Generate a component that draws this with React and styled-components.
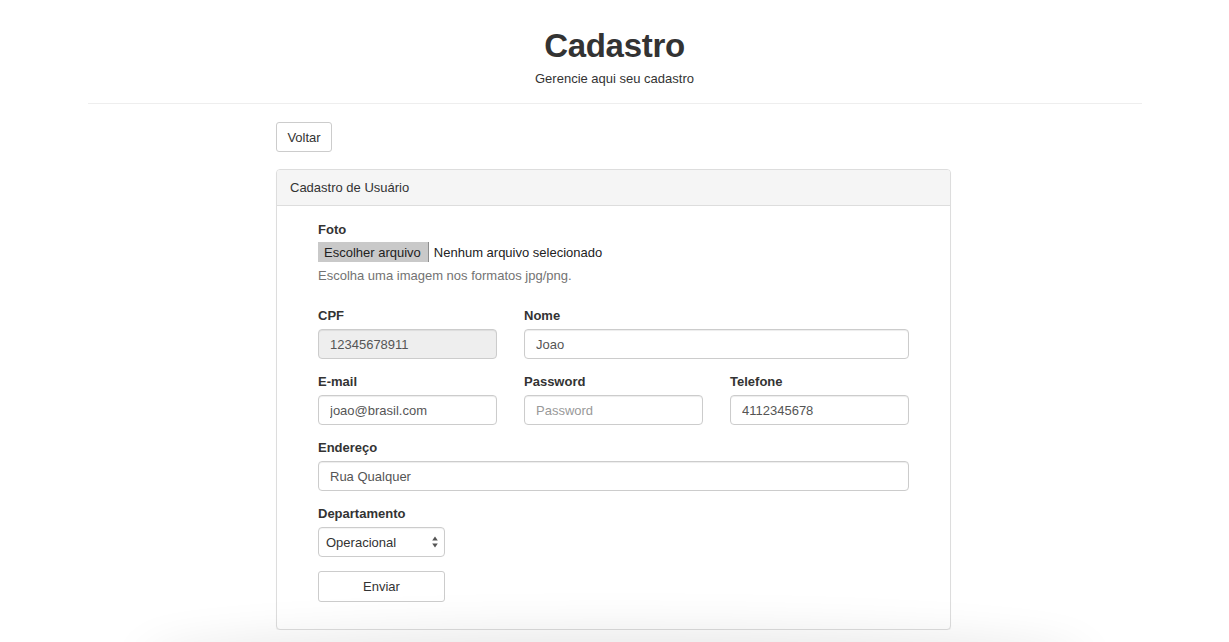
import React from "react";
import styled, { createGlobalStyle } from "styled-components";

const GlobalStyle = createGlobalStyle`
  * { box-sizing: border-box; }
  html, body { margin: 0; padding: 0; background: #fff; }
  body {
    font-family: "Liberation Sans", Arial, sans-serif;
    font-size: 13px;
    color: #333;
  }
`;

const Header = styled.header`
  text-align: center;
  padding-top: 28px;
`;

const Title = styled.h1`
  margin: 0;
  font-size: 33px;
  line-height: 36px;
  font-weight: bold;
  color: #333;
  letter-spacing: -0.3px;
`;

const Subtitle = styled.p`
  margin: 6px 0 0;
  font-size: 13px;
  line-height: 18px;
  color: #333;
`;

const Divider = styled.hr`
  width: 1054px;
  margin: 15px auto 0;
  border: 0;
  border-top: 1px solid #eee;
`;

const Main = styled.main`
  width: 675px;
  margin: 18px auto 0;
  transform: translateX(-1px);
`;

const Button = styled.button`
  font-family: inherit;
  font-size: 13px;
  color: #333;
  background: #fff;
  border: 1px solid #ccc;
  border-radius: 3px;
  height: ${(p) => p.$h || 30}px;
  width: ${(p) => (p.$w ? `${p.$w}px` : "auto")};
  padding: 0 10px;
  cursor: pointer;
`;

const Panel = styled.section`
  margin-top: 17px;
  border: 1px solid #ddd;
  border-radius: 4px;
  background: #fff;
  box-shadow: 0 1px 1px rgba(0, 0, 0, 0.05);
`;

const PanelHeading = styled.div`
  background: #f5f5f5;
  border-bottom: 1px solid #ddd;
  border-radius: 3px 3px 0 0;
  height: 36px;
  padding: 0 13px;
  display: flex;
  align-items: center;
  font-size: 13px;
`;

const PanelBody = styled.div`
  padding: 14px 40px 27px 41px;
`;

const Form = styled.form`
  display: grid;
  grid-template-columns: repeat(3, 1fr);
  column-gap: 27px;
  width: 591px;
`;

const Group = styled.div`
  grid-column: span ${(p) => p.$span || 1};
  margin-bottom: ${(p) => (p.$mb !== undefined ? p.$mb : 13)}px;
  display: flex;
  flex-direction: column;
  align-items: flex-start;
`;

const Label = styled.label`
  font-weight: bold;
  font-size: 13px;
  line-height: 20px;
  margin-bottom: ${(p) => p.$mb || 3}px;
`;

const Input = styled.input`
  width: 100%;
  height: 30px;
  font-family: inherit;
  font-size: 13px;
  color: #555;
  padding: 0 11px;
  border: 1px solid #ccc;
  border-radius: 4px;
  background: ${(p) => (p.disabled ? "#eee" : "#fff")};
  box-shadow: inset 0 1px 1px rgba(0, 0, 0, 0.075);
  outline: none;
  &::placeholder { color: #999; }
`;

const FileRow = styled.div`
  display: flex;
  align-items: center;
  height: 20px;
  font-size: 13px;
  color: #222;
`;

const FileButton = styled.span`
  display: inline-flex;
  align-items: center;
  height: 20px;
  padding: 0 7px 0 6px;
  background: #c9c9c9;
  border-right: 1px solid #8e8e8e;
  color: #222;
  margin-right: 5px;
`;

const Help = styled.p`
  margin: 5px 0 0;
  font-size: 13px;
  line-height: 18px;
  color: #737373;
`;

const SelectWrap = styled.div`
  position: relative;
  width: 127px;
  height: 30px;
`;

const Select = styled.select`
  appearance: none;
  -webkit-appearance: none;
  width: 100%;
  height: 30px;
  font-family: inherit;
  font-size: 13px;
  color: #333;
  padding: 0 7px;
  border: 1px solid #ccc;
  border-radius: 4px;
  background: #fff;
  box-shadow: inset 0 1px 1px rgba(0, 0, 0, 0.05);
`;

const Arrows = styled.svg`
  position: absolute;
  right: 7px;
  top: 9px;
  pointer-events: none;
`;

const BottomShade = styled.div`
  position: fixed;
  left: 150px;
  right: 150px;
  bottom: -40px;
  height: 40px;
  border-radius: 50%;
  box-shadow: 0 0 45px 12px rgba(0, 0, 0, 0.09);
  pointer-events: none;
  z-index: 10;
`;

export default function App() {
  return (
    <>
      <GlobalStyle />
      <Header>
        <Title>Cadastro</Title>
        <Subtitle>Gerencie aqui seu cadastro</Subtitle>
      </Header>
      <Divider />
      <Main>
        <Button type="button" $w={56} $h={30}>Voltar</Button>
        <Panel>
          <PanelHeading>Cadastro de Usuário</PanelHeading>
          <PanelBody>
            <Form onSubmit={(e) => e.preventDefault()}>
              <Group $span={3} $mb={21}>
                <Label $mb={2}>Foto</Label>
                <FileRow>
                  <FileButton>Escolher arquivo</FileButton>
                  Nenhum arquivo selecionado
                </FileRow>
                <Help>Escolha uma imagem nos formatos jpg/png.</Help>
              </Group>
              <Group>
                <Label>CPF</Label>
                <Input disabled defaultValue="12345678911" />
              </Group>
              <Group $span={2}>
                <Label>Nome</Label>
                <Input defaultValue="Joao" />
              </Group>
              <Group>
                <Label>E-mail</Label>
                <Input defaultValue="joao@brasil.com" />
              </Group>
              <Group>
                <Label>Password</Label>
                <Input type="password" placeholder="Password" />
              </Group>
              <Group>
                <Label>Telefone</Label>
                <Input defaultValue="4112345678" />
              </Group>
              <Group $span={3}>
                <Label>Endereço</Label>
                <Input defaultValue="Rua Qualquer" />
              </Group>
              <Group $span={3} $mb={14}>
                <Label>Departamento</Label>
                <SelectWrap>
                  <Select defaultValue="Operacional">
                    <option>Operacional</option>
                    <option>Administrativo</option>
                    <option>Financeiro</option>
                  </Select>
                  <Arrows width="6" height="12" viewBox="0 0 6 12">
                    <path d="M3 0.5 L5.8 4.6 L0.2 4.6 Z" fill="#555" />
                    <path d="M3 11.5 L5.8 7.4 L0.2 7.4 Z" fill="#555" />
                  </Arrows>
                </SelectWrap>
              </Group>
              <Group $span={3} $mb={0}>
                <Button type="submit" $w={127} $h={31}>Enviar</Button>
              </Group>
            </Form>
          </PanelBody>
        </Panel>
      </Main>
      <BottomShade />
    </>
  );
}
